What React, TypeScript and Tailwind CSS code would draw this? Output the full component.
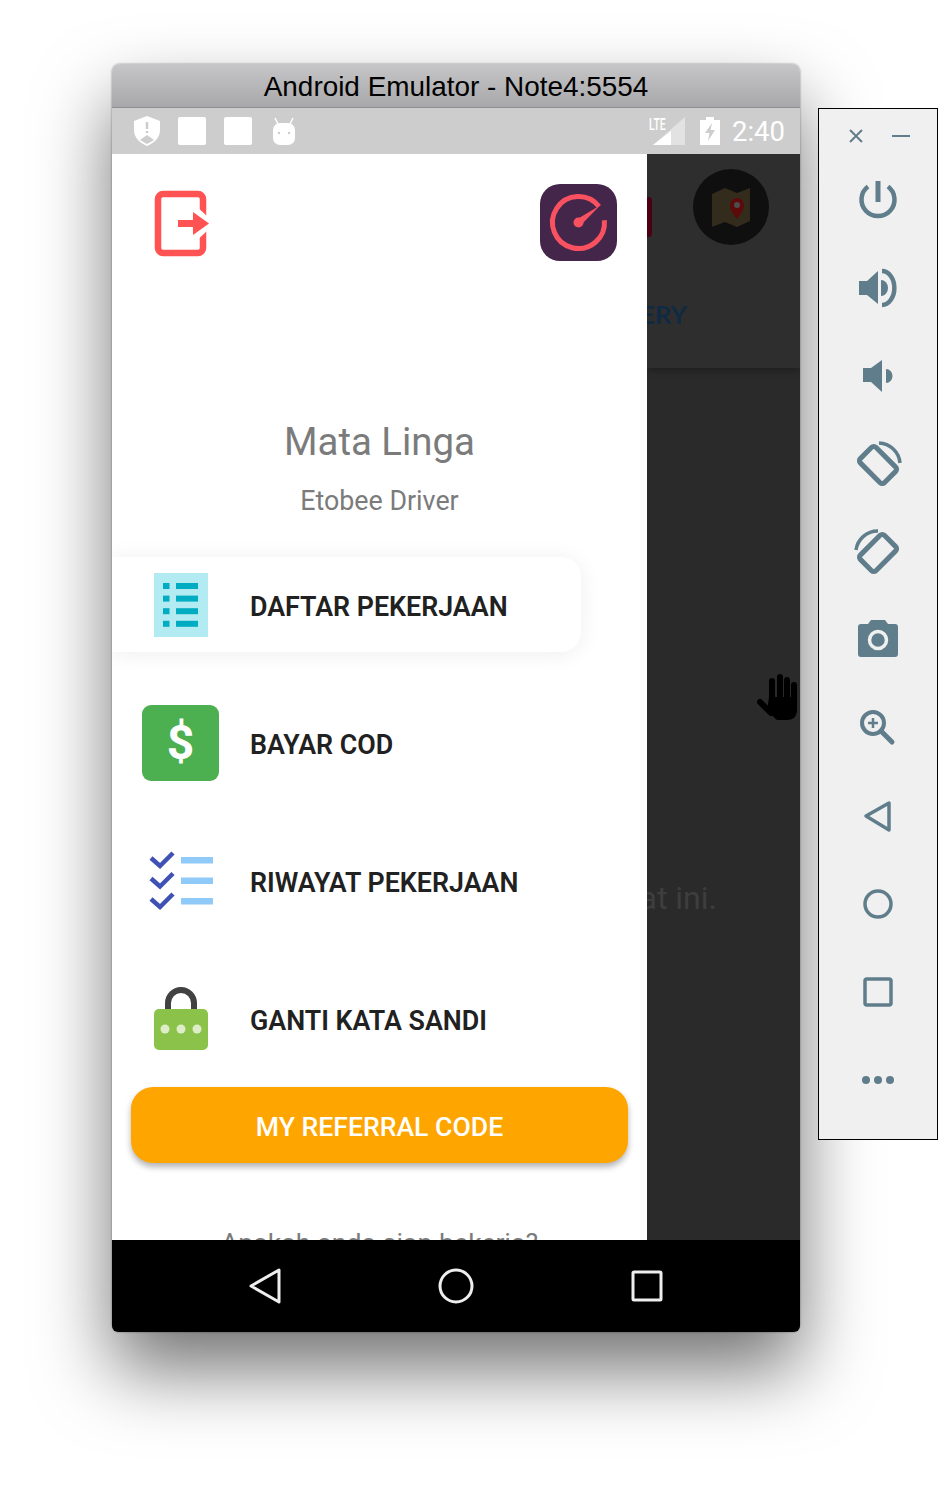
import type { ReactNode } from 'react'

const roboto = { fontFamily: 'Roboto, sans-serif' }

function Svg({ w, h, children }: { w: number; h: number; children: ReactNode }) {
  return (
    <svg width={w} height={h} viewBox={`0 0 ${w} ${h}`} className="block overflow-visible">
      {children}
    </svg>
  )
}

const TOOL = '#607d8b'

const TOOL_ICONS: ReactNode[] = [
  <Svg w={40} h={40}>
    <path d="M10 6.5 A16.5 16.5 0 1 0 30 6.5" fill="none" stroke={TOOL} strokeWidth={4.5} />
    <path d="M20 1 V22" stroke={TOOL} strokeWidth={5} />
  </Svg>,
  <Svg w={40} h={40}>
    <path d="M1 13 H9 L20 3 V36 L9 27 H1 Z" fill={TOOL} />
    <path d="M23 12 A7 8 0 0 1 23 28 Z" fill={TOOL} />
    <path d="M24 3 A12 16.5 0 0 1 24 37" fill="none" stroke={TOOL} strokeWidth={4.5} />
  </Svg>,
  <Svg w={40} h={40}>
    <path d="M5 12 H13 L24 4 V36 L13 26 H5 Z" fill={TOOL} />
    <path d="M28 13 A6.5 7 0 0 1 28 27 Z" fill={TOOL} />
  </Svg>,
  <Svg w={48} h={48}>
    <rect x={13} y={8} width={22} height={34} rx={3} transform="rotate(-45 24 25)" fill="none" stroke={TOOL} strokeWidth={5} />
    <path d="M25 3 A22 22 0 0 1 46 23" fill="none" stroke={TOOL} strokeWidth={3.5} />
  </Svg>,
  <Svg w={48} h={48}>
    <rect x={13} y={8} width={22} height={34} rx={3} transform="rotate(45 24 25)" fill="none" stroke={TOOL} strokeWidth={5} />
    <path d="M2 22 A22 22 0 0 1 24 3" fill="none" stroke={TOOL} strokeWidth={3.5} />
  </Svg>,
  <Svg w={40} h={40}>
    <path d="M10 4 L13 0 H27 L30 4 H37 Q40 4 40 7 V34 Q40 37 37 37 H3 Q0 37 0 34 V7 Q0 4 3 4 Z" fill={TOOL} />
    <circle cx={20} cy={20} r={8.5} fill="none" stroke="#f0f0f0" strokeWidth={3.5} />
  </Svg>,
  <Svg w={40} h={40}>
    <circle cx={15} cy={15} r={11} fill="none" stroke={TOOL} strokeWidth={4} />
    <path d="M10 15 H20 M15 10 V20" stroke={TOOL} strokeWidth={2.5} />
    <path d="M23 23 L34 34" stroke={TOOL} strokeWidth={5} strokeLinecap="round" />
  </Svg>,
  <Svg w={40} h={40}>
    <path d="M8 20 L31 7 V34 Z" fill="none" stroke={TOOL} strokeWidth={3.5} strokeLinejoin="round" />
  </Svg>,
  <Svg w={40} h={40}>
    <circle cx={20} cy={20} r={13} fill="none" stroke={TOOL} strokeWidth={3.5} />
  </Svg>,
  <Svg w={40} h={40}>
    <rect x={7} y={7} width={26} height={26} rx={2} fill="none" stroke={TOOL} strokeWidth={3.5} />
  </Svg>,
  <Svg w={40} h={40}>
    <circle cx={8} cy={20} r={4} fill={TOOL} />
    <circle cx={20} cy={20} r={4} fill={TOOL} />
    <circle cx={32} cy={20} r={4} fill={TOOL} />
  </Svg>,
]

function Toolbar() {
  return (
    <aside className="absolute left-[818px] top-[108px] flex h-[1032px] w-[120px] flex-col border border-black bg-[#f0f0f0]">
      <div className="flex h-[47px] shrink-0 items-end justify-center gap-[27px] pb-[11px]">
        <Svg w={18} h={18}>
          <path d="M3 3 L15 15 M15 3 L3 15" stroke={TOOL} strokeWidth={2} />
        </Svg>
        <div className="mb-2 h-[2px] w-[18px] bg-[#607d8b]" />
      </div>
      {TOOL_ICONS.map((icon, i) => (
        <div key={i} className="flex h-[88px] shrink-0 items-center justify-center">
          {icon}
        </div>
      ))}
    </aside>
  )
}

function StatusBar() {
  return (
    <div className="flex h-[46px] shrink-0 items-center bg-[#cdcdcd] pl-[22px] pr-[15px]">
      <Svg w={26} h={30}>
        <path d="M13 0 L26 5 V14 C26 22 20 27 13 30 C6 27 0 22 0 14 V5 Z" fill="#fff" />
        <path d="M13 6 V13 M13 15 V17" stroke="#cdcdcd" strokeWidth={2.5} />
        <path d="M6 24 L13 19 L20 24 L13 28 Z" fill="#cdcdcd" />
      </Svg>
      <div className="ml-[18px] h-[28px] w-[28px] rounded-[2px] bg-white" />
      <div className="ml-[18px] h-[28px] w-[28px] rounded-[2px] bg-white" />
      <div className="ml-[20px]">
        <Svg w={24} h={27}>
          <path d="M3 0 L6 6 M21 0 L18 6" stroke="#fff" strokeWidth={1.5} />
          <rect x={1} y={5} width={22} height={22} rx={7} fill="#fff" />
          <circle cx={7} cy={15} r={1.2} fill="#cdcdcd" />
          <circle cx={17} cy={15} r={1.2} fill="#cdcdcd" />
        </Svg>
      </div>
      <div className="relative ml-auto h-[32px] w-[36px]">
        <svg width={32} height={28} viewBox="0 0 32 28" className="absolute left-[4px] top-[2px]">
          <path d="M32 0 V28 H0 Z" fill="#e2e2e2" />
          <path d="M18 14 V28 H0 Z" fill="#fff" />
        </svg>
        <span
          className="absolute left-0 top-[1px] origin-left text-[17px] font-medium leading-[16px] text-white [transform:scaleX(0.62)]"
          style={roboto}
        >
          LTE
        </span>
      </div>
      <div className="ml-[15px]">
        <Svg w={20} h={28}>
          <path d="M6 0 H14 V3 H20 V28 H0 V3 H6 Z" fill="#fff" />
          <path d="M12 6 L5 16 H9.5 L8 24 L15 13 H10.5 Z" fill="#cdcdcd" />
        </Svg>
      </div>
      <span className="ml-[12px] pt-[2px] text-[27.5px] leading-none text-white" style={roboto}>
        2:40
      </span>
    </div>
  )
}

function ListIcon() {
  return (
    <Svg w={54} h={64}>
      <rect width={54} height={64} fill="#b2ebf2" />
      {[10, 22.6, 35.2, 47.8].map((y) => (
        <g key={y} fill="#00acc1">
          <rect x={9} y={y} width={6.5} height={6} />
          <rect x={22} y={y} width={22} height={6} />
        </g>
      ))}
    </Svg>
  )
}

function DollarIcon() {
  return (
    <div
      className="mb-[2px] mr-[1px] flex h-[76px] w-[77px] items-center justify-center rounded-[9px] bg-[#4caf50] text-[48px] font-bold leading-none text-white"
      style={roboto}
    >
      $
    </div>
  )
}

function ChecklistIcon() {
  return (
    <div className="mb-[3px]">
      <Svg w={66} h={62}>
        {[0, 20.5, 41].map((dy) => (
          <g key={dy}>
            <path d={`M3 ${8 + dy} L12 ${16 + dy} L25 ${3 + dy}`} fill="none" stroke="#3f51b5" strokeWidth={4.5} />
            <rect x={33} y={7 + dy} width={32} height={6.5} fill="#90caf9" />
          </g>
        ))}
      </Svg>
    </div>
  )
}

function LockIcon() {
  return (
    <div className="mb-[4px]">
      <Svg w={54} h={63}>
        <path d="M14 24 V16 A13 13 0 0 1 40 16 V24" fill="none" stroke="#424242" strokeWidth={6} />
        <rect y={22} width={54} height={41} rx={5} fill="#8bc34a" />
        <circle cx={11} cy={42} r={4.5} fill="#dcedc8" />
        <circle cx={27} cy={42} r={4.5} fill="#dcedc8" />
        <circle cx={43} cy={42} r={4.5} fill="#dcedc8" />
      </Svg>
    </div>
  )
}

function MenuRow({ icon, label, active }: { icon: ReactNode; label: string; active?: boolean }) {
  return (
    <div
      className={
        active
          ? 'mt-[41px] flex h-[95px] w-[469px] items-center rounded-r-[20px] bg-white shadow-[0_2px_22px_rgba(0,0,0,0.07)]'
          : 'flex h-[138px] items-center'
      }
    >
      <div className="flex w-[138px] shrink-0 justify-center">{icon}</div>
      <span
        className={
          active
            ? 'pt-[6px] text-[26.8px] font-semibold leading-none text-[#212121]'
            : 'pt-[2px] text-[26.8px] font-semibold leading-none text-[#212121]'
        }
        style={roboto}
      >
        {label}
      </span>
    </div>
  )
}

function Drawer() {
  return (
    <div className="relative z-10 h-full w-[535px] shrink-0 overflow-hidden bg-white">
      <div className="flex items-start justify-between pl-[43px] pr-[30px] pt-[30px]">
        <div className="mt-[7px]">
          <Svg w={54} h={65}>
            <rect x={3} y={3} width={45} height={59} rx={5} fill="none" stroke="#ff5252" strokeWidth={6.5} />
            <path d="M38 12 L60 32.5 L38 53 Z" fill="#fff" />
            <rect x={23} y={29} width={16} height={7} fill="#ff5252" />
            <path d="M38 21 L54 32.5 L38 44 Z" fill="#ff5252" />
          </Svg>
        </div>
        <div className="h-[77px] w-[77px] overflow-hidden rounded-[20px] bg-[#44264a]">
          <Svg w={77} h={77}>
            <path d="M59 22.5 A26 26 0 1 0 64.4 36.2" fill="none" stroke="#f9515f" strokeWidth={5} />
            <path d="M36.5 35.5 L60 21.5 L40.5 41.5 Z" fill="#f9515f" />
            <circle cx={38.5} cy={38.5} r={5} fill="#f9515f" />
          </Svg>
        </div>
      </div>

      <p className="mt-[156px] text-center text-[38.4px] leading-[50px] text-[#7b7b7b]" style={roboto}>
        Mata Linga
      </p>
      <p className="mt-[18px] text-center text-[26.8px] leading-[32px] text-[#7b7b7b]" style={roboto}>
        Etobee Driver
      </p>

      <div className="-mt-[1px]">
        <MenuRow active icon={<ListIcon />} label="DAFTAR PEKERJAAN" />
      </div>
      <div className="mt-[23px]">
        <MenuRow icon={<DollarIcon />} label="BAYAR COD" />
        <MenuRow icon={<ChecklistIcon />} label="RIWAYAT PEKERJAAN" />
        <MenuRow icon={<LockIcon />} label="GANTI KATA SANDI" />
      </div>

      <button
        className="-mt-[2px] ml-[19px] flex h-[76px] w-[497px] items-center justify-center rounded-[22px] bg-[#ffa500] pt-[3px] text-[26.6px] font-medium text-white shadow-[0_4px_6px_rgba(0,0,0,0.3)]"
        style={roboto}
      >
        MY REFERRAL CODE
      </button>

      <p className="mt-[64px] text-center text-[26.7px] leading-[32px] text-[#7b7b7b]" style={roboto}>
        Apakah anda siap bekerja?
      </p>
    </div>
  )
}

// what is left of the app behind the open drawer, dimmed
function DimmedScreen() {
  return (
    <div className="relative h-full flex-1 overflow-hidden bg-[#2a2a2a]">
      <div className="h-[214px] bg-[#2e2e2e] shadow-[0_3px_6px_rgba(0,0,0,0.25)]">
        <div className="flex items-start">
          <div className="mt-[43px] h-[40px] w-[5px] rounded-r-[4px] bg-[#4a0012]" />
          <div className="ml-[41px] mt-[15px] h-[76px] w-[76px] rounded-full bg-[#0f0f0f]">
            <Svg w={76} h={76}>
              <path d="M19 25 L32 19 L44 24 L57 19 V52 L44 58 L32 53 L19 58 Z" fill="#332c1c" />
              <path d="M44 50 C40 44 37 41 37 36 A7 7 0 0 1 51 36 C51 41 48 44 44 50 Z" fill="#5c0a0a" />
              <circle cx={44} cy={36} r={3} fill="#4d4d4d" />
            </Svg>
          </div>
        </div>
        <div
          className="mt-[53px] flex w-[40px] justify-end whitespace-nowrap text-[25.5px] font-bold leading-[32px] text-[#0f2a42]"
          style={{ fontFamily: 'Lato, sans-serif' }}
        >
          DELIVERY
        </div>
      </div>

      <div className="mt-[511px] flex w-[70px] justify-end whitespace-nowrap text-[32px] leading-[38px] text-[#3e3e3e]" style={roboto}>
        saat ini.
      </div>

      {/* mouse cursor */}
      <svg width={42} height={48} viewBox="0 0 42 48" className="absolute left-[110px] top-[519px]">
        <g stroke="#000" strokeWidth={6} strokeLinecap="round">
          <path d="M15 8 V26 M23 4 V26 M30 7 V26 M37 12 V30" />
          <path d="M3 29 L14 40" />
        </g>
        <path d="M12 24 H40 V36 Q40 47 30 47 H20 L10 38 Z" fill="#000" />
      </svg>
    </div>
  )
}

function NavBar() {
  return (
    <div className="flex h-[92px] shrink-0 items-center rounded-b-[6px] bg-black pl-[57px]">
      <div className="flex w-[191px] justify-center">
        <Svg w={32} h={36}>
          <path d="M2 18 L30 2 V34 Z" fill="none" stroke="#eee" strokeWidth={3} strokeLinejoin="round" />
        </Svg>
      </div>
      <div className="flex w-[191px] justify-center">
        <Svg w={36} h={36}>
          <circle cx={18} cy={18} r={16} fill="none" stroke="#eee" strokeWidth={3} />
        </Svg>
      </div>
      <div className="flex w-[191px] justify-center">
        <Svg w={32} h={32}>
          <rect x={2} y={2} width={28} height={28} rx={1} fill="none" stroke="#eee" strokeWidth={3} />
        </Svg>
      </div>
    </div>
  )
}

export default function App() {
  return (
    <div className="relative h-[1492px] w-[938px] overflow-hidden bg-white">
      <div className="absolute left-[112px] top-[64px] flex h-[1268px] w-[688px] flex-col rounded-[8px] shadow-[0_38px_75px_rgba(0,0,0,0.55),0_0_2px_rgba(0,0,0,0.5)]">
        <div
          className="flex h-[44px] shrink-0 items-center justify-center rounded-t-[8px] border-b border-[#8f8f8f] bg-gradient-to-b from-[#c6c5c7] to-[#a8a7a9] pt-[3px] text-[27.9px] leading-none text-black"
          style={{ fontFamily: '"Liberation Sans", sans-serif' }}
        >
          Android Emulator - Note4:5554
        </div>
        <StatusBar />
        <div className="flex min-h-0 flex-1 overflow-hidden">
          <Drawer />
          <DimmedScreen />
        </div>
        <NavBar />
      </div>
      <Toolbar />
    </div>
  )
}
